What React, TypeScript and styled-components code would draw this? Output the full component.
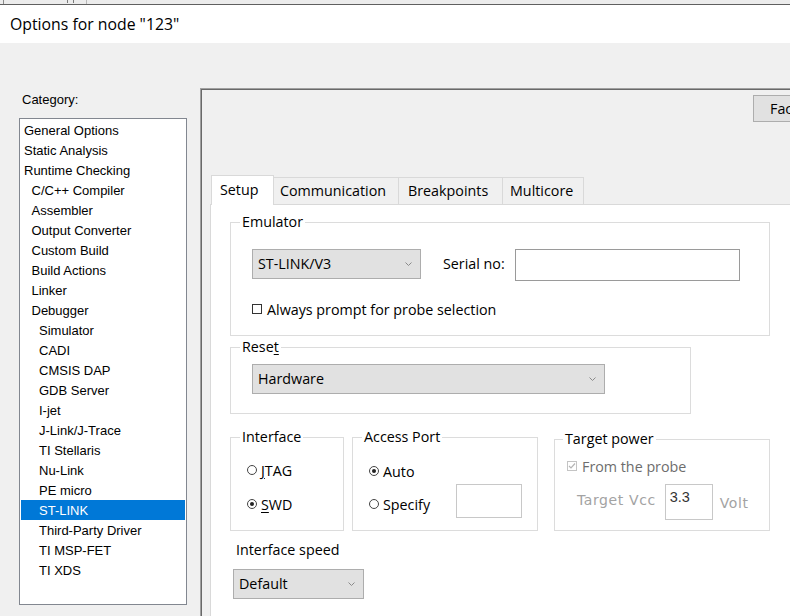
import React from 'react';
import styled, { createGlobalStyle } from 'styled-components';

const UI = '"Open Sans", "Noto Sans", sans-serif';
const CLASSIC = '"Liberation Sans", Arial, sans-serif';

const Global = createGlobalStyle`
  html, body { margin: 0; padding: 0; background: #f0f0f0; overflow: hidden; }
  #root { width: 790px; height: 616px; overflow: hidden; }
`;

const Window = styled.div`
  width: 790px;
  height: 616px;
  overflow: hidden;
  display: flex;
  flex-direction: column;
  background: #f0f0f0;
  font-family: ${UI};
  font-size: 14.3px;
  color: #000;
`;

const TopStrip = styled.div`
  height: 4px;
  flex-shrink: 0;
  background: #ececec;
  border-bottom: 1px solid #5f5f5f;
  display: flex;
`;

const StripTab = styled.div`
  margin-left: 3px;
  width: 84px;
  border-left: 1px solid #8a8a8a;
  border-right: 1px solid #b8b8b8;
  display: flex;
  justify-content: flex-end;
  gap: 3px;
  padding-right: 12px;
  box-sizing: border-box;
`;

const StripMark = styled.span`
  width: 2px;
  height: 3px;
  border-right: 1px solid #7a7a7a;
`;

const TitleBar = styled.div`
  height: 38px;
  flex-shrink: 0;
  background: #fff;
  display: flex;
  align-items: center;
  padding: 0 0 0 10px;
  box-sizing: border-box;
  font-size: 15.8px;
`;

const Main = styled.div`
  flex: 1;
  display: flex;
  align-items: flex-start;
  min-height: 0;
`;

const Sidebar = styled.div`
  width: 168px;
  margin: 49px 0 0 19px;
  flex-shrink: 0;
  display: flex;
  flex-direction: column;
  gap: 10px;
  font-family: ${CLASSIC};
  font-size: 13px;
`;

const SideLabel = styled.div`
  line-height: 16px;
  padding-left: 3px;
`;

const CategoryList = styled.ul`
  list-style: none;
  margin: 0;
  padding: 1px;
  height: 487px;
  box-sizing: border-box;
  border: 1px solid #828790;
  background: #fff;
`;

const CategoryItem = styled.li<{ $level: number; $selected?: boolean }>`
  height: 20px;
  line-height: 21px;
  padding-left: ${p => 3 + p.$level * 7.5}px;
  white-space: nowrap;
  background: ${p => (p.$selected ? '#0078d7' : 'transparent')};
  color: ${p => (p.$selected ? '#fff' : '#000')};
`;

const Panel = styled.section`
  margin: 45px 0 0 13px;
  width: 702px;
  height: 560px;
  flex-shrink: 0;
  box-sizing: border-box;
  border-left: 1px solid #a0a0a0;
  border-top: 1px solid #a0a0a0;
  box-shadow: inset 1px 1px 0 #696969;
  padding: 1px 0 0 1px;
  display: flex;
  flex-direction: column;
`;

const FactoryButton = styled.button`
  align-self: flex-end;
  margin: 5px 8px 0 0;
  width: 141px;
  height: 27px;
  padding: 0 0 0 16px;
  text-align: left;
  background: #e1e1e1;
  border: 1px solid #adadad;
  font-family: ${UI};
  font-size: 14.3px;
  color: #000;
`;

const TabControl = styled.div`
  margin: 53px 0 0 8px;
  flex: 1;
  display: flex;
  flex-direction: column;
`;

const TabStrip = styled.div`
  height: 29px;
  display: flex;
  align-items: flex-end;
  padding-left: 1px;
`;

const Tab = styled.div<{ $active?: boolean; $w: number; $pl: number }>`
  position: relative;
  z-index: ${p => (p.$active ? 2 : 1)};
  width: ${p => p.$w}px;
  height: ${p => (p.$active ? 30 : 27)}px;
  margin-bottom: ${p => (p.$active ? -1 : 0)}px;
  margin-left: ${p => (p.$active ? 0 : -1)}px;
  box-sizing: border-box;
  border: 1px solid #d9d9d9;
  border-bottom: none;
  background: ${p => (p.$active ? '#fff' : '#f0f0f0')};
  display: flex;
  align-items: center;
  padding: 0 0 ${p => (p.$active ? 3 : 1)}px ${p => p.$pl}px;
  white-space: nowrap;
`;

const TabPage = styled.div`
  flex: 1;
  background: #fff;
  border-top: 1px solid #d9d9d9;
  border-left: 1px solid #d9d9d9;
  padding: 7px 0 0 19px;
  display: flex;
  flex-direction: column;
  align-items: flex-start;
`;

const Group = styled.fieldset<{ $w: number; $mt?: number; $ml?: number }>`
  margin: ${p => p.$mt ?? 0}px 0 0 ${p => p.$ml ?? 0}px;
  padding: 0;
  width: ${p => p.$w}px;
  min-width: 0;
  box-sizing: border-box;
  border: 1px solid #dcdcdc;
  display: flex;
  flex-direction: column;
`;

const Legend = styled.legend<{ $ml?: number }>`
  margin-left: ${p => p.$ml ?? 9}px;
  padding: 0 2px;
  line-height: 20px;
`;

const GroupBody = styled.div<{ $pad: string }>`
  padding: ${p => p.$pad};
  display: flex;
  flex-direction: column;
  flex: 1;
`;

const Row = styled.div<{ $mt?: number }>`
  display: flex;
  align-items: flex-start;
  margin-top: ${p => p.$mt ?? 0}px;
`;

const Combo = styled.div<{ $w: number }>`
  width: ${p => p.$w}px;
  height: 30px;
  box-sizing: border-box;
  background: #e1e1e1;
  border: 1px solid #adadad;
  display: flex;
  align-items: center;
  padding: 0 8px 1px 5px;
  white-space: nowrap;
`;

const ComboText = styled.span`
  flex: 1;
`;

const FieldLabel = styled.span<{ $ml?: number }>`
  margin-left: ${p => p.$ml ?? 0}px;
  line-height: 30px;
  white-space: nowrap;
`;

const TextBox = styled.div<{ $w: number; $h: number; $border?: string }>`
  width: ${p => p.$w}px;
  height: ${p => p.$h}px;
  box-sizing: border-box;
  background: #fff;
  border: 1px solid ${p => p.$border ?? '#c8c8c8'};
  flex-shrink: 0;
`;

const SerialBox = styled(TextBox)`
  margin-left: auto;
`;

const CheckRow = styled.label<{ $disabled?: boolean; $mt?: number }>`
  display: flex;
  align-items: center;
  gap: 5px;
  height: 20px;
  margin-top: ${p => p.$mt ?? 0}px;
  color: ${p => (p.$disabled ? '#6d6d6d' : '#000')};
  white-space: nowrap;
`;

const CheckBox = styled.span<{ $disabled?: boolean }>`
  width: 10px;
  height: 10px;
  box-sizing: border-box;
  border: 1px solid ${p => (p.$disabled ? '#c4c4c4' : '#333')};
  background: #fff;
  display: flex;
  align-items: center;
  justify-content: center;
  flex-shrink: 0;
`;

const RadioRow = styled.label<{ $mt?: number }>`
  display: flex;
  align-items: center;
  gap: 4px;
  height: 20px;
  margin-top: ${p => p.$mt ?? 0}px;
  white-space: nowrap;
`;

const RadioDot = styled.span<{ $on?: boolean }>`
  width: 10px;
  height: 10px;
  box-sizing: border-box;
  border-radius: 50%;
  border: 1px solid #444;
  background: #fff;
  display: flex;
  align-items: center;
  justify-content: center;
  flex-shrink: 0;
  &::after {
    content: '';
    width: 4px;
    height: 4px;
    border-radius: 50%;
    background: ${p => (p.$on ? '#222' : 'transparent')};
  }
`;

const SpecifyRow = styled.div`
  display: flex;
  justify-content: space-between;
  align-items: flex-start;
  margin-top: 3px;
`;

const SpecifyLabel = styled(RadioRow)`
  margin-top: 10px;
`;

const VccRow = styled.div`
  display: flex;
  align-items: center;
  margin: 8px 0 0 10px;
  font-family: "DejaVu Sans", Verdana, sans-serif;
  font-size: 14px;
  letter-spacing: 0.6px;
  color: #a3a3a3;
`;

const VccLabel = styled.span<{ $shift: number; $ml?: number }>`
  margin-left: ${p => p.$ml ?? 0}px;
  padding: ${p => (p.$shift < 0 ? `0 0 ${-p.$shift}px` : `${p.$shift}px 0 0`)};
  white-space: nowrap;
`;

const VccBox = styled(TextBox)`
  margin-left: 9px;
  padding: 2px 0 0 4px;
  line-height: 20px;
  letter-spacing: 0;
  font-family: ${CLASSIC};
  font-size: 14.5px;
  color: #333;
`;

const SpeedLabel = styled.div`
  margin: 9px 0 0 6px;
  line-height: 20px;
`;

const SpeedCombo = styled(Combo)`
  margin: 9px 0 0 3px;
`;

const U = styled.span`
  text-decoration: underline;
  text-underline-offset: 2px;
`;

const ThreeRow = styled.div`
  display: flex;
  align-items: stretch;
  margin-top: 13px;
`;

const Chevron = () => (
  <svg width="7" height="4" viewBox="0 0 7 4" fill="none">
    <path d="M0.5 0.5 L3.5 3.5 L6.5 0.5" stroke="#8a8a8a" strokeWidth="1" />
  </svg>
);

const Tick = () => (
  <svg width="8" height="8" viewBox="0 0 8 8" fill="none">
    <path d="M1 4 L3 6 L7 1.5" stroke="#b5b5b5" strokeWidth="1.2" />
  </svg>
);

const categories: [string, number][] = [
  ['General Options', 0],
  ['Static Analysis', 0],
  ['Runtime Checking', 0],
  ['C/C++ Compiler', 1],
  ['Assembler', 1],
  ['Output Converter', 1],
  ['Custom Build', 1],
  ['Build Actions', 1],
  ['Linker', 1],
  ['Debugger', 1],
  ['Simulator', 2],
  ['CADI', 2],
  ['CMSIS DAP', 2],
  ['GDB Server', 2],
  ['I-jet', 2],
  ['J-Link/J-Trace', 2],
  ['TI Stellaris', 2],
  ['Nu-Link', 2],
  ['PE micro', 2],
  ['ST-LINK', 2],
  ['Third-Party Driver', 2],
  ['TI MSP-FET', 2],
  ['TI XDS', 2],
];

const tabs: [string, number, number][] = [
  ['Setup', 63, 8],
  ['Communication', 126, 6],
  ['Breakpoints', 105, 9],
  ['Multicore', 82, 7],
];

export default function App() {
  return (
    <Window>
      <Global />
      <TopStrip>
        <StripTab>
          <StripMark />
          <StripMark />
        </StripTab>
      </TopStrip>
      <TitleBar>Options for node "123"</TitleBar>
      <Main>
        <Sidebar>
          <SideLabel>Category:</SideLabel>
          <CategoryList>
            {categories.map(([name, level]) => (
              <CategoryItem key={name} $level={level} $selected={name === 'ST-LINK'}>
                {name}
              </CategoryItem>
            ))}
          </CategoryList>
        </Sidebar>
        <Panel>
          <FactoryButton>Factory Settings</FactoryButton>
          <TabControl>
            <TabStrip>
              {tabs.map(([name, w, pl], i) => (
                <Tab key={name} $w={w} $pl={pl} $active={i === 0}>
                  {name}
                </Tab>
              ))}
            </TabStrip>
            <TabPage>
              <Group $w={540}>
                <Legend>Emulator</Legend>
                <GroupBody $pad="17px 29px 16px 21px">
                  <Row>
                    <Combo $w={169}>
                      <ComboText>ST-LINK/V3</ComboText>
                      <Chevron />
                    </Combo>
                    <FieldLabel $ml={22}>Serial no:</FieldLabel>
                    <SerialBox $w={225} $h={32} $border="#9a9a9a" />
                  </Row>
                  <CheckRow $mt={18}>
                    <CheckBox />
                    Always prompt for probe selection
                  </CheckRow>
                </GroupBody>
              </Group>

              <Group $w={461} $mt={1}>
                <Legend>
                  Rese<U>t</U>
                </Legend>
                <GroupBody $pad="7px 0 19px 21px">
                  <Combo $w={353}>
                    <ComboText>Hardware</ComboText>
                    <Chevron />
                  </Combo>
                </GroupBody>
              </Group>

              <ThreeRow>
                <Group $w={114}>
                  <Legend>Interface</Legend>
                  <GroupBody $pad="13px 0 16px 16px">
                    <RadioRow>
                      <RadioDot />
                      <span>
                        <U>J</U>TAG
                      </span>
                    </RadioRow>
                    <RadioRow $mt={14}>
                      <RadioDot $on />
                      <span>
                        <U>S</U>WD
                      </span>
                    </RadioRow>
                  </GroupBody>
                </Group>

                <Group $w={186} $ml={8}>
                  <Legend>Access Port</Legend>
                  <GroupBody $pad="14px 15px 12px 16px">
                    <RadioRow>
                      <RadioDot $on />
                      Auto
                    </RadioRow>
                    <SpecifyRow>
                      <SpecifyLabel>
                        <RadioDot />
                        Specify
                      </SpecifyLabel>
                      <TextBox $w={66} $h={34} />
                    </SpecifyRow>
                  </GroupBody>
                </Group>

                <Group $w={216} $ml={16} $mt={2}>
                  <Legend $ml={8}>Target power</Legend>
                  <GroupBody $pad="7px 0 10px 12px">
                    <CheckRow $disabled>
                      <CheckBox $disabled>
                        <Tick />
                      </CheckBox>
                      From the probe
                    </CheckRow>
                    <VccRow>
                      <VccLabel $shift={-5}>Target Vcc</VccLabel>
                      <VccBox $w={48} $h={36}>3.3</VccBox>
                      <VccLabel $shift={2} $ml={7}>
                        Volt
                      </VccLabel>
                    </VccRow>
                  </GroupBody>
                </Group>
              </ThreeRow>

              <SpeedLabel>Interface speed</SpeedLabel>
              <SpeedCombo $w={131}>
                <ComboText>Default</ComboText>
                <Chevron />
              </SpeedCombo>
            </TabPage>
          </TabControl>
        </Panel>
      </Main>
    </Window>
  );
}
